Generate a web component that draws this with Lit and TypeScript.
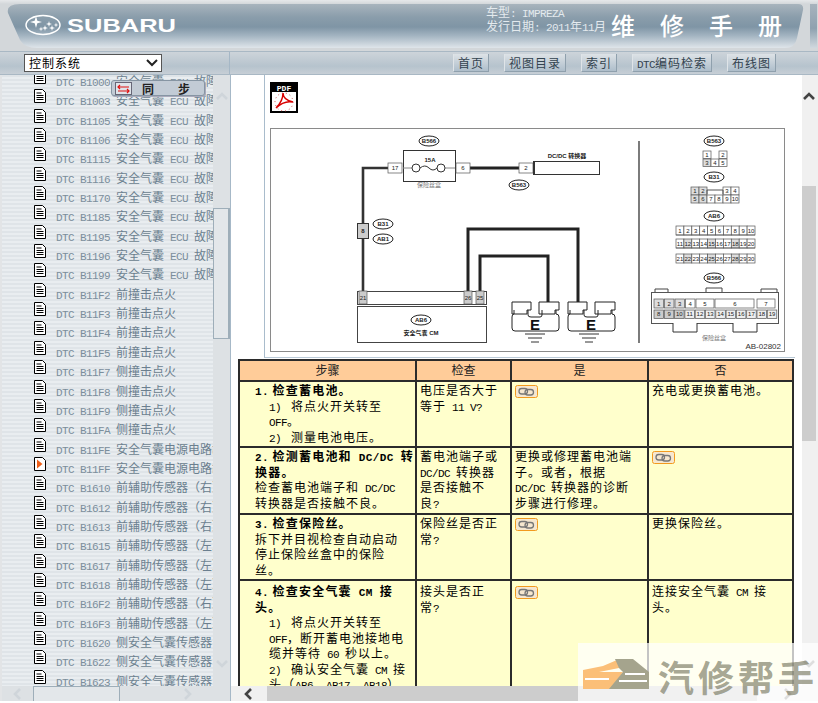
import { LitElement, html, css, svg } from "lit";
import { customElement } from "lit/decorators.js";

const runs = (text: string) =>
  text.split(/([\x00-\x7f]+)/).filter(Boolean).map((p) =>
    /^[\x00-\x7f]/.test(p) ? html`<span class="l">${p}</span>` : html`<span>${p}</span>`
  );

const ECU = "安全气囊 ECU 故障";
const codes: [string, string][] = [
  ...["B1000","B1003","B1105","B1106","B1115","B1116","B1170","B1185","B1195","B1196","B1199"].map((c) => [c, ECU] as [string,string]),
  ...["B11F2","B11F3","B11F4","B11F5"].map((c) => [c, "前撞击点火"] as [string,string]),
  ...["B11F7","B11F8","B11F9","B11FA"].map((c) => [c, "侧撞击点火"] as [string,string]),
  ["B11FE", "安全气囊电源电路故障"], ["B11FF", "安全气囊电源电路故障"],
  ["B1610", "前辅助传感器（右）"], ["B1612", "前辅助传感器（右）"], ["B1613", "前辅助传感器（右）"],
  ["B1615", "前辅助传感器（左）"], ["B1617", "前辅助传感器（左）"], ["B1618", "前辅助传感器（左）"],
  ["B16F2", "前辅助传感器（右）"], ["B16F3", "前辅助传感器（左）"],
  ["B1620", "侧安全气囊传感器"], ["B1622", "侧安全气囊传感器"], ["B1623", "侧安全气囊传感器"],
];

type L = { t: string; c?: string };
type Row = { h: number; step: L[]; check: L[]; yes: L[] | null; no: L[] | null };
const rows: Row[] = [
  { h: 66, step: [
      { t: "1.\u2009检查蓄电池。", c: "title" }, { t: "1) \u2005将点火开关转至", c: "sub" }, { t: "OFF。", c: "sub" }, { t: "2) \u2005测量电池电压。", c: "sub" } ],
    check: [{ t: "电压是否大于" }, { t: "等于 11 V?" }], yes: null, no: [{ t: "充电或更换蓄电池。" }] },
  { h: 67, step: [
      { t: "2.\u2009检测蓄电池和 DC/DC 转", c: "title" }, { t: "换器。", c: "title" }, { t: "检查蓄电池端子和 DC/DC", c: "body" }, { t: "转换器是否接触不良。", c: "body" } ],
    check: [{ t: "蓄电池端子或" }, { t: "DC/DC 转换器" }, { t: "是否接触不" }, { t: "良?" }],
    yes: [{ t: "更换或修理蓄电池端" }, { t: "子。或者，根据" }, { t: "DC/DC 转换器的诊断" }, { t: "步骤进行修理。" }], no: null },
  { h: 66, step: [
      { t: "3.\u2009检查保险丝。", c: "title" }, { t: "拆下并目视检查自动启动", c: "body" }, { t: "停止保险丝盒中的保险", c: "body" }, { t: "丝。", c: "body" } ],
    check: [{ t: "保险丝是否正" }, { t: "常?" }], yes: null, no: [{ t: "更换保险丝。" }] },
  { h: 130, step: [
      { t: "4.\u2009检查安全气囊 CM 接", c: "title" }, { t: "头。", c: "title" }, { t: "1) \u2005将点火开关转至", c: "sub" },
      { t: "OFF，断开蓄电池接地电", c: "sub" }, { t: "缆并等待 60 秒以上。", c: "sub" }, { t: "2) \u2005确认安全气囊 CM 接", c: "sub" }, { t: "头（AB6、AB17、AB18）", c: "sub" } ],
    check: [{ t: "接头是否正" }, { t: "常?" }], yes: null, no: [{ t: "连接安全气囊 CM 接" }, { t: "头。" }] },
];

const star = (x: number, y: number, r: number) => {
  const k = r * 0.22;
  return svg`<path d="M${x} ${y - r}L${x + k} ${y - k}L${x + r} ${y}L${x + k} ${y + k}L${x} ${y + r}L${x - k} ${y + k}L${x - r} ${y}L${x - k} ${y - k}Z" fill="#fff"/>`;
};
const oval = (x: number, y: number, t: string) => svg`
  <ellipse cx=${x} cy=${y} rx="10" ry="5" fill="#fff" stroke="#222" stroke-width="1"/>
  <text x=${x} y=${y + 2} class="s b" text-anchor="middle">${t}</text>`;
const cell = (x: number, y: number, w: number, h: number, t: string, fill = "#fff") => svg`
  <rect x=${x} y=${y} width=${w} height=${h} fill=${fill} stroke="#555" stroke-width=".7"/>
  <text x=${x + w / 2} y=${y + h / 2 + 2} class="s" text-anchor="middle">${t}</text>`;
const ground = (x: number) => svg`
  <path d="M${x - 10} 334H${x + 10}M${x - 7} 338H${x + 7}M${x - 4} 342H${x + 4}" stroke="#333" fill="none"/>`;
const eUnit = (x: number) => svg`
  <path d="M${x} 302h19v8h-4v4h-15zM${x + 27} 302h20v8h-4v4h-16v-4h0z" fill="#fff" stroke="#222"/>
  <path d="M${x + 2} 310v4q-2 0 -2 3v11q0 3 3 3h41q3 0 3-3v-11q0-3-3-3v-4M${x + 16} 310v5q0 2 3 2h9q2 0 2-2v-5" fill="none" stroke="#222"/>
  <text x=${x + 23} y="330" class="e" text-anchor="middle">E</text>`;

const diagram = () => {
  const ab: unknown[] = [];
  const w = 7.9;
  [226, 239, 254].forEach((y, r) => {
    for (let i = 0; i < 10; i++) ab.push(cell(676 + i * w, y, w, 9, String(r * 10 + i + 1), (r > 0 && i % 3 === 1) ? "#ddd" : "#fff"));
  });
  const top = [[1, 0], [2, 1], [3, 2], [4, 3]].map(([n, i]) => cell(654 + i * 10.5, 299, 9.5, 9, String(n), i < 3 ? "#ddd" : "#fff"));
  const bot: unknown[] = [];
  for (let i = 0; i < 12; i++) bot.push(cell(654 + i * 10.3, 310, 9.5, 8.5, String(i + 8), i < 3 ? "#ccc" : "#eee"));
  return html`<svg class="dia" viewBox="270 128 515 224" width="515" height="224">
    ${oval(429, 141, "B566")}
    <path d="M470 168H519" stroke="#222" stroke-width="3"/>
    <path d="M388 168H363V291" stroke="#333" stroke-width="2.6" fill="none"/>
    <rect x="403.500" y="150.500" width="52" height="31" fill="#fff" stroke="#333"/>
    <path d="M403 168h9M445 168h10" stroke="#888"/>
    <circle cx="416" cy="168" r="4" fill="#fff" stroke="#333"/><circle cx="441" cy="168" r="4" fill="#fff" stroke="#333"/>
    <path d="M420 168q5-4 9 0t8 0" fill="none" stroke="#333"/>
    <text x="430" y="162" class="s b" text-anchor="middle">15A</text>
    <text x="429" y="187" class="s g" text-anchor="middle">保险丝盒</text>
    ${cell(388, 163, 14, 10, "17", "#fff")}${cell(456, 163, 14, 10, "6", "#fff")}
    ${cell(519, 163, 14, 10, "2", "#fff")}
    <rect x="533.500" y="161.500" width="3" height="13" fill="#fff" stroke="#333"/>
    <rect x="534.500" y="161.500" width="65" height="13" fill="#fff" stroke="#333"/>
    <text x="567" y="158" class="s b" text-anchor="middle">DC/DC 转换器</text>
    ${oval(519, 185, "B563")}
    <rect x="357.500" y="223.500" width="11" height="15" fill="#ccc" stroke="#333"/>
    <text x="363" y="233" class="s b" text-anchor="middle">8</text>
    ${oval(383, 224, "B31")}${oval(383, 239, "AB1")}
    <path d="M468 291V229H578V302M480 291V256H548V302" stroke="#222" stroke-width="3" fill="none"/>
    <rect x="357.500" y="291.500" width="129" height="13" fill="#fff" stroke="#444"/>
    <rect x="357.500" y="306.500" width="129" height="36" fill="#fff" stroke="#444"/>
    ${cell(359, 291, 8, 13, "21", "#ccc")}${cell(464, 291, 8, 13, "26", "#ccc")}${cell(476, 291, 8, 13, "25", "#ccc")}
    ${oval(421, 320, "AB6")}
    <text x="421" y="335" class="s b" text-anchor="middle">安全气囊 CM</text>
    ${eUnit(512)}${eUnit(568)}${ground(535)}${ground(589)}
    <path d="M639 141V343" stroke="#444" stroke-width="1.400"/>
    ${oval(714, 141, "B563")}
    ${cell(703, 151, 8, 7.500, "1")}${cell(719, 151, 8, 7.500, "2")}
    ${cell(703, 159, 8, 7.500, "3", "#ddd")}${cell(711, 159, 8, 7.500, "4")}${cell(719, 159, 8, 7.500, "5")}
    ${oval(714, 177, "B31")}
    ${[[1,691],[2,699],[3,723],[4,731]].map(([n, x]) => cell(x, 187, 8, 8, String(n), n < 3 ? "#ddd" : "#fff"))}
    ${[5,6,7,8,9,10].map((n, i) => cell(691 + i * 8, 195, 8, 8, String(n), i < 2 ? "#ddd" : "#fff"))}
    <path d="M707 194V190H723V194" fill="none" stroke="#555"/>
    ${oval(714, 216, "AB6")}
    ${ab}
    <path d="M676 235H755M676 248H755" stroke="#555" stroke-width=".7"/>
    ${oval(714, 278, "B566")}
    <path d="M655 292V289h13v3M706 292V288h16v4M761 292V289h16v3" fill="#fff" stroke="#444"/>
    <rect x="651.500" y="292.500" width="127" height="31" fill="#fff" stroke="#555"/>
    <path d="M673 323v9h24v-9M733 323v9h24v-9" fill="#fff" stroke="#333"/>
    ${top}
    <rect x="696" y="299" width="18" height="9" fill="#fff" stroke="#555" stroke-width=".7"/><text x="705" y="306" class="s" text-anchor="middle">5</text>
    <rect x="715" y="299" width="39" height="9" fill="#fff" stroke="#555" stroke-width=".7"/><text x="735" y="306" class="s" text-anchor="middle">6</text>
    <rect x="757" y="299" width="18" height="9" fill="#fff" stroke="#555" stroke-width=".7"/><text x="766" y="306" class="s" text-anchor="middle">7</text>
    ${bot}
    <text x="714" y="340" class="s g" text-anchor="middle">保险丝盒</text>
    <text x="781" y="349" class="ab" text-anchor="end">AB-02802</text>
  </svg>`;
};

const docIcon = html`<svg class="doc" viewBox="0 0 12 14" width="12" height="14"><path d="M.5.5h8l3 3v10H.5z" fill="#fff" stroke="#000"/><path d="M2.500 4h5M2.500 6.500h7M2.500 8.500h7M2.500 10.500h7" stroke="#000"/></svg>`;
const docPlay = html`<svg class="doc" viewBox="0 0 12 14" width="12" height="14"><path d="M.5.5h8l3 3v10H.5z" fill="#fff" stroke="#000"/><path d="M3 2.500L8.500 7 3 11.500z" fill="#f0601a"/></svg>`;
const link = html`<svg class="link" viewBox="0 0 23 13" width="23" height="13"><rect x=".5" y=".5" width="22" height="12" rx="2" fill="#f6e7cf" stroke="#f29a1e"/><rect x="4" y="3.500" width="8.500" height="5.500" rx="2.700" fill="none" stroke="#777" stroke-width="1.300"/><rect x="10" y="4.500" width="8.500" height="5.500" rx="2.700" fill="none" stroke="#777" stroke-width="1.300"/></svg>`;
const chev = (d: string, c: string) => {
  const p: Record<string, string> = { up: "M2 9L7 4L12 9", down: "M2 4L7 9L12 4", left: "M9 2L4 7L9 12", right: "M4 2L9 7L4 12" };
  return html`<svg viewBox="0 0 14 14" width="14" height="14"><path d=${p[d]} fill="none" stroke=${c} stroke-width="2.600"/></svg>`;
};

@customElement("app-root")
export class AppRoot extends LitElement {
  static styles = css`
    :host { display: block; width: 818px; height: 703px; position: relative; overflow: hidden; background: #fff;
      font-family: "Noto Sans CJK SC", "Liberation Sans", sans-serif; font-size: 12px; }
    .l { font-family: "Liberation Mono", monospace; font-size: 11px; letter-spacing: -.6px; }
    .header { height: 51px; box-sizing: border-box; padding: 4px 0 0 7px; display: flex; background: linear-gradient(#e6e8ea 0, #d3d7da 4px); }
    .banner { width: 797px; height: 44px; display: flex; align-items: center; color: #eef2f5;
      background: linear-gradient(#a8b4bd 0, #8a9dab 30%, #7f95a5 52%, #a3b4c1 72%, #dfe5ea 100%);
      clip-path: path("M13 0H791Q797 0 796 6L790 34Q788 44 778 44H30Q18 44 13 36L1 9Q-1 0 13 0Z"); }
    .logo { margin: -2px 0 0 18px; flex: none; }
    .info { margin: -14px 0 0 309px; width: 125px; flex: none; font-size: 12px; white-space: pre; color: #e4eaee; }
    .info div { height: 14px; line-height: 14px; }
    .mtitle { font-size: 24px; letter-spacing: 25px; white-space: pre; font-weight: 500; color: #fff; margin-top: -3px; }
    .edge { width: 7px; margin: 0 0 3px 6px; background: linear-gradient(#a7b3bd, #8ea1af 55%, #d0d8de); flex: none; }
    .toolbar { height: 24px; box-sizing: border-box; display: flex; background: linear-gradient(#cdd4da, #b6c3cd 65%, #c7cfd6);
      border-top: 1px solid #a9b8c4; border-bottom: 1px solid #a9b8c4; }
    .tool-left { width: 230px; box-sizing: border-box; padding: 2px 0 0 24px; border-right: 1px solid #a5b7c6; }
    .select { width: 138px; height: 18px; box-sizing: border-box; border: 1px solid #555; background: #fff; display: flex; align-items: center;
      justify-content: space-between; padding: 0 3px 0 4px; letter-spacing: 1px; line-height: 16px; color: #000; }
    .tool-right { flex: 1; display: flex; gap: 15px; padding: 2px 0 0 223px; }
    .btn { height: 18px; box-sizing: border-box; padding: 0 4px; line-height: 17px; letter-spacing: 1px; color: #33434f; white-space: pre;
      background: linear-gradient(#dde2e6, #aebecb); border-right: 1px solid #8fa0ad; border-bottom: 1px solid #8fa0ad; border-left: 1px solid #dfe4e8; }
    .main { display: flex; height: 628px; }
    aside { width: 231px; box-sizing: border-box; border-left: 2px solid #e2e4e6; border-right: 1px solid #a6b8c7; display: flex; flex-direction: column; height: 626px; }
    .pane { flex: 1; display: flex; min-height: 0; }
    .list { width: 211px; overflow: hidden; background: repeating-linear-gradient(#dfe4e8 0 2px, #e9edf0 2px 4px); }
    .rows { margin-top: -4px; }
    .row { height: 19.35px; display: flex; padding-left: 32px; white-space: pre; color: #6b7f8f; line-height: 19px; }
    .doc { margin-top: -1px; flex: none; }
    .row .txt { margin-left: 10px; }
    .row .l { color: #7b8e9c; }
    .vs { width: 17px; display: flex; flex-direction: column; align-items: stretch; flex: none; }
    .sl .seg, .sl .rest, .sl.hs { background: #dde1e4; }
    .seg { display: flex; justify-content: center; }
    .seg.t { padding-top: 15px; box-sizing: border-box; }
    .rest { flex: 1; display: flex; justify-content: center; align-items: flex-end; padding-bottom: 15px; }
    .sl .seg.t { height: 133px; }
    .sl .th { height: 131px; box-sizing: border-box; background: #e3e7ea; border: 1px solid #9eaeb9; border-right-width: 2px; }
    .hs { height: 15px; display: flex; align-items: center; flex: none; }
    .hs .a { display: flex; justify-content: center; flex: none; }
    .sl.hs .a1 { width: 31px; }
    .sl.hs .hth { width: 87px; height: 15px; box-sizing: border-box; background: #e3e7ea; border: 1px solid #9eaeb9; border-bottom: 0; }
    .sl.hs .a2 { flex: 1; padding-left: 25px; box-sizing: border-box; }
    section { flex: 1; display: flex; flex-direction: column; min-width: 0; height: 626px; }
    .view { flex: 1; display: flex; min-height: 0; }
    .content { width: 571px; overflow: hidden; flex: none; }
    .note { margin-left: 33px; width: 531px; height: 283px; box-sizing: border-box; border-left: 1px solid #a9bccc; border-bottom: 1px solid #b8c8d6; padding: 7px 0 0 5px; }
    .pdf { display: block; width: 28px; height: 31px; }
    .frame { width: 515px; height: 224px; margin-top: 15px; box-sizing: border-box; border: 1px solid #8a8a8a; overflow: hidden; }
    .dia { display: block; margin: -1px; }
    .dia text { font-family: "Liberation Sans", "Noto Sans CJK SC", sans-serif; }
    .dia .s { font-size: 6px; fill: #222; }
    .dia .b { font-weight: 700; }
    .dia .g { fill: #777; }
    .dia .e { font-size: 15px; font-weight: 700; fill: #111; }
    .dia .ab { font-size: 8px; fill: #333; }
    table { border-collapse: collapse; table-layout: fixed; width: 554px; margin: 1px 0 0 7px; letter-spacing: 1px; color: #000; }
    th, td { border: 2px solid #2b2b2b; vertical-align: top; padding: 0 0 0 3px; overflow: hidden; }
    tr:last-child td { padding-top: 2px; }
    th { background: #fc9; font-weight: 400; text-align: center; height: 19px; padding: 0; letter-spacing: 0; line-height: 18px; color: #222; }
    td { background: #ffc; }
    .ln { line-height: 15.5px; white-space: pre; height: 15.5px; }
    .ln.title { letter-spacing: 1.2px; font-weight: 700; padding-left: 12px; }
    .ln.title .l { font-weight: 700; letter-spacing: .4px; }
    .ln.sub { padding-left: 26px; }
    .ln.body { padding-left: 12px; }
    .link { display: block; margin: 3px 0 0 0; }
    .rs.hs { background: #f0f0f0; }
    .rs .a1 { width: 36px; }
    .rs .hth { width: 490px; height: 15px; background: #cdcdcd; }
    .rs .a2 { flex: 1; }
    .rs.vs { width: 16px; background: #f0f0f0; align-items: flex-start; }
    .rs.vs .seg.t { height: 111px; }
    .rs.vs .th { height: 255px; width: 14px; background: #cdcdcd; }
    .rs.vs .seg, .rs.vs .rest { width: 14px; }
    .popup { position: absolute; left: 111px; top: 80px; width: 94px; height: 16px; box-sizing: border-box; border-radius: 3px; border: 1px solid #8695a3;
      background: #c2cbd5; display: flex; align-items: center; padding-left: 3px; font-weight: 700; font-size: 12px; color: #222; white-space: pre; box-shadow: 1px 1px 0 #aab; }
    .popup svg { flex: none; margin-right: 10px; }
    .popup .gap { margin-right: 24px; }
    .mark { position: absolute; left: 578px; top: 643px; width: 240px; height: 60px; background: rgba(255,255,255,.72); display: flex; align-items: flex-start;
      padding: 15px 0 0 5px; box-sizing: border-box; }
    .mark .name { font-size: 36px; line-height: 36px; font-weight: 700; letter-spacing: 4px; color: rgba(110,110,85,.62); margin-left: 9px; white-space: pre; }
  `;

  private vs(cls: string, upC: string, downC: string) {
    return html`<div class="vs ${cls}">
      <div class="seg t">${chev("up", upC)}</div><div class="th"></div><div class="rest">${chev("down", downC)}</div></div>`;
  }
  private hs(cls: string, lc: string, rc: string) {
    return html`<div class="hs ${cls}"><div class="a a1">${chev("left", lc)}</div><div class="hth"></div><div class="a a2">${chev("right", rc)}</div></div>`;
  }
  private lines(ls: L[]) {
    return ls.map((l) => html`<div class="ln ${l.c ?? ""}">${runs(l.t)}</div>`);
  }

  render() {
    return html`
      <div class="header">
        <div class="banner">
          <svg class="logo" viewBox="0 0 152 24" width="152" height="24">
            <ellipse cx="18" cy="12" rx="17" ry="9.500" fill="none" stroke="#fff" stroke-width="1.500"/>
            ${star(11, 9, 6)}${star(20, 15, 3)}${star(24, 11, 3)}${star(27, 15, 3)}${star(31, 12, 2.500)}${star(16, 16, 2.500)}
            <text x="42" y="19" font-family="Liberation Sans" font-weight="700" font-size="18.500" fill="#fff" textLength="109" lengthAdjust="spacingAndGlyphs">SUBARU</text>
          </svg>
          <div class="info"><div>${runs("车型: IMPREZA")}</div><div>${runs("发行日期: 2011年11月")}</div></div>
          <div class="mtitle">维修手册</div>
        </div>
        <div class="edge"></div>
      </div>
      <div class="toolbar">
        <div class="tool-left"><div class="select"><span>控制系统</span>
          <svg viewBox="0 0 12 8" width="12" height="8"><path d="M1 1l5 5 5-5" fill="none" stroke="#222" stroke-width="2"/></svg></div></div>
        <div class="tool-right">
          ${["首页", "视图目录", "索引", "DTC编码检索", "布线图"].map((b) => html`<div class="btn">${runs(b)}</div>`)}
        </div>
      </div>
      <div class="main">
        <aside>
          <div class="pane">
            <div class="list"><div class="rows">
              ${codes.map(([c, t]) => html`<div class="row">${c === "B11FF" ? docPlay : docIcon}<span class="txt">${runs(`DTC ${c} `)}${runs(t)}</span></div>`)}
            </div></div>
            ${this.vs("sl", "#cfd5da", "#cfd5da")}
          </div>
          ${this.hs("sl", "#cfd5da", "#cfd5da")}
        </aside>
        <section>
          <div class="view">
            <div class="content">
              <div class="note">
                <svg class="pdf" viewBox="0 0 28 31">
                  <rect x="1" y="1" width="26" height="29" fill="#fff" stroke="#000" stroke-width="2"/>
                  <rect x="2" y="2" width="24" height="8" fill="#000"/>
                  <text x="14" y="9" text-anchor="middle" font-family="Liberation Mono" font-weight="700" font-size="8" fill="#fff">PDF</text>
                  <path d="M6 26C10 22 13 17 13 11C13 13 14 18 23 20C18 19 12 20 6 26Z" fill="none" stroke="#d80000" stroke-width="1.500"/>
                  <circle cx="14" cy="20" r="9" fill="none" stroke="#c44" stroke-width="1" stroke-dasharray="1 3"/>
                </svg>
                <div class="frame">${diagram()}</div>
              </div>
              <table>
                <colgroup><col style="width:177px"/><col style="width:95px"/><col style="width:137px"/><col style="width:145px"/></colgroup>
                <tr><th>步骤</th><th>检查</th><th>是</th><th>否</th></tr>
                ${rows.map((r) => html`<tr style="height:${r.h}px">
                  <td>${this.lines(r.step)}</td>
                  <td>${this.lines(r.check)}</td>
                  <td>${r.yes ? this.lines(r.yes) : link}</td>
                  <td>${r.no ? this.lines(r.no) : link}</td>
                </tr>`)}
              </table>
            </div>
            ${this.vs("rs", "#444", "#888")}
          </div>
          ${this.hs("rs", "#444", "#888")}
        </section>
      </div>
      <div class="popup">
        <svg viewBox="0 0 17 13" width="17" height="13"><rect x=".5" y=".5" width="16" height="12" fill="#dfe4ea" stroke="#667"/><path d="M3 5h11M5 3L3 5l2 2M3 9h11M12 7l2 2-2 2" fill="none" stroke="#e01010" stroke-width="1.200"/></svg>
        <span class="gap">同</span><span>步</span>
      </div>
      <div class="mark">
        <svg viewBox="0 0 66 32" width="66" height="32">
          <path d="M0 12L20 8L34 2L44 2L36 10L16 14L40 14L28 31H0Z" fill="#fbbf78"/>
          <path d="M32 1H50L66 14V31H26L40 14L36 10Z" fill="#a5a48d"/>
          <path d="M2 21H26M42 16H62M36 23H64" stroke="#fff" stroke-width="2"/>
        </svg>
        <span class="name">汽修帮手</span>
      </div>
    `;
  }
}
